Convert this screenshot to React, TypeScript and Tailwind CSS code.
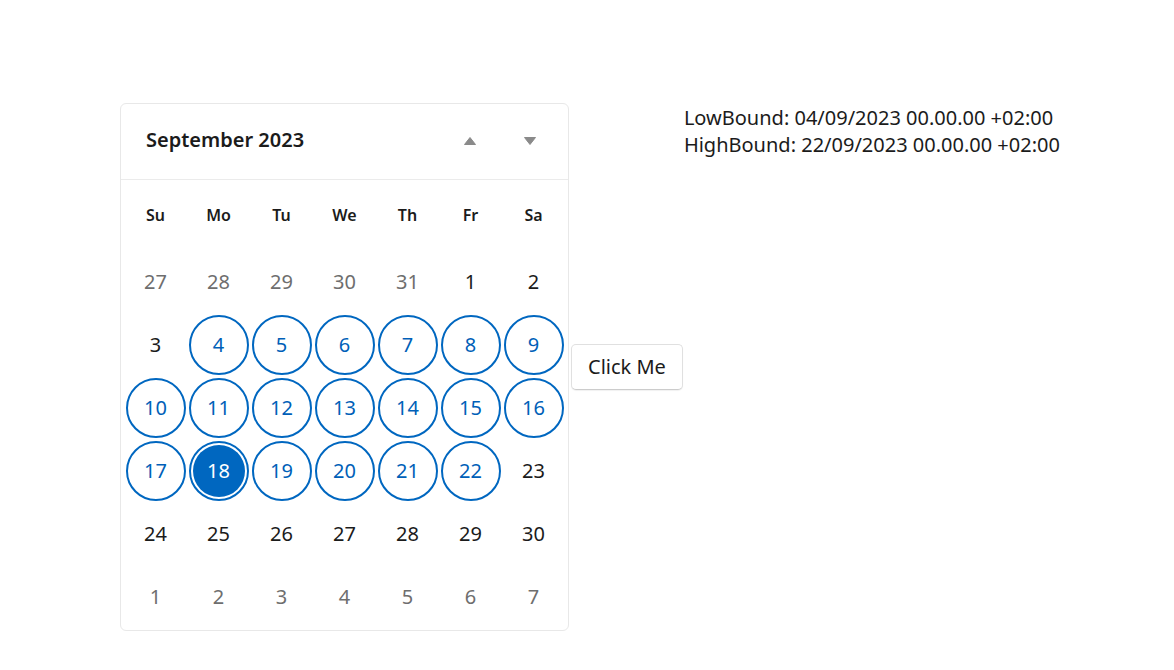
import React from "react";

type Day = { n: number; muted?: boolean; inRange?: boolean; selected?: boolean };

const weekDays = ["Su", "Mo", "Tu", "We", "Th", "Fr", "Sa"];

function buildDays(): Day[] {
  const days: Day[] = [];
  [27, 28, 29, 30, 31].forEach((n) => days.push({ n, muted: true }));
  for (let n = 1; n <= 30; n++) {
    days.push({ n, inRange: n >= 4 && n <= 22, selected: n === 18 });
  }
  [1, 2, 3, 4, 5, 6, 7].forEach((n) => days.push({ n, muted: true }));
  return days;
}

function Triangle({ up }: { up?: boolean }) {
  return (
    <svg width="14" height="10" viewBox="0 0 14 10">
      <path
        d={up ? "M7 1.5 L12.5 8.5 L1.5 8.5 Z" : "M1.5 1.5 L12.5 1.5 L7 8.5 Z"}
        fill="#8a8a8a"
        stroke="#8a8a8a"
        strokeWidth="1"
        strokeLinejoin="round"
      />
    </svg>
  );
}

function DayCell({ day }: { day: Day }) {
  if (day.selected) {
    return (
      <div className="flex h-[63px] w-[63px] items-center justify-center">
        <div className="flex h-[60px] w-[60px] items-center justify-center rounded-full border-2 border-[#0067c0] bg-white p-[2px]">
          <div className="flex h-full w-full items-center justify-center rounded-full bg-[#0067c0] text-white">
            {day.n}
          </div>
        </div>
      </div>
    );
  }
  if (day.inRange) {
    return (
      <div className="flex h-[63px] w-[63px] items-center justify-center">
        <div className="flex h-[60px] w-[60px] items-center justify-center rounded-full border-2 border-[#0067c0] text-[#005fb8]">
          {day.n}
        </div>
      </div>
    );
  }
  return (
    <div
      className={
        "flex h-[63px] w-[63px] items-center justify-center " +
        (day.muted ? "text-[#6e6e6e]" : "text-[#1b1b1b]")
      }
    >
      {day.n}
    </div>
  );
}

export default function App() {
  const days = buildDays();

  return (
    <div className="min-h-[670px] bg-white font-['Noto_Sans',sans-serif] text-[#1b1b1b]">
      <div className="flex items-start pl-[120px] pt-[103px]">
        <div className="flex self-stretch items-center gap-[2px]">
          <div className="w-[449px] rounded-md border border-[#e8e8e8] bg-white">
            <div className="flex h-[76px] items-center border-b border-[#ebebeb] pb-[3px] pl-[25px] pr-[31px]">
              <span className="flex-1 text-[20px] font-semibold">September 2023</span>
              <div className="flex items-center gap-[46px] pt-[2px]">
                <Triangle up />
                <Triangle />
              </div>
            </div>
            <div className="px-[3px] pb-[2px]">
              <div className="grid h-[70px] grid-cols-7 items-center">
                {weekDays.map((d) => (
                  <div key={d} className="text-center text-[16px] font-semibold">
                    {d}
                  </div>
                ))}
              </div>
              <div className="grid grid-cols-7 text-[20px]">
                {days.map((d, i) => (
                  <DayCell key={i} day={d} />
                ))}
              </div>
            </div>
          </div>
          <button className="h-[46px] rounded-[5px] border border-[#e0e0e0] border-b-[#cccccc] bg-white px-[16px] text-[20px] text-[#1b1b1b] shadow-[0_1px_1px_rgba(0,0,0,0.06)]">
            Click Me
          </button>
        </div>
        <div className="ml-[1px] pt-[1px] text-[20px] leading-[27px]">
          <div>LowBound: 04/09/2023 00.00.00 +02:00</div>
          <div>HighBound: 22/09/2023 00.00.00 +02:00</div>
        </div>
      </div>
    </div>
  );
}
